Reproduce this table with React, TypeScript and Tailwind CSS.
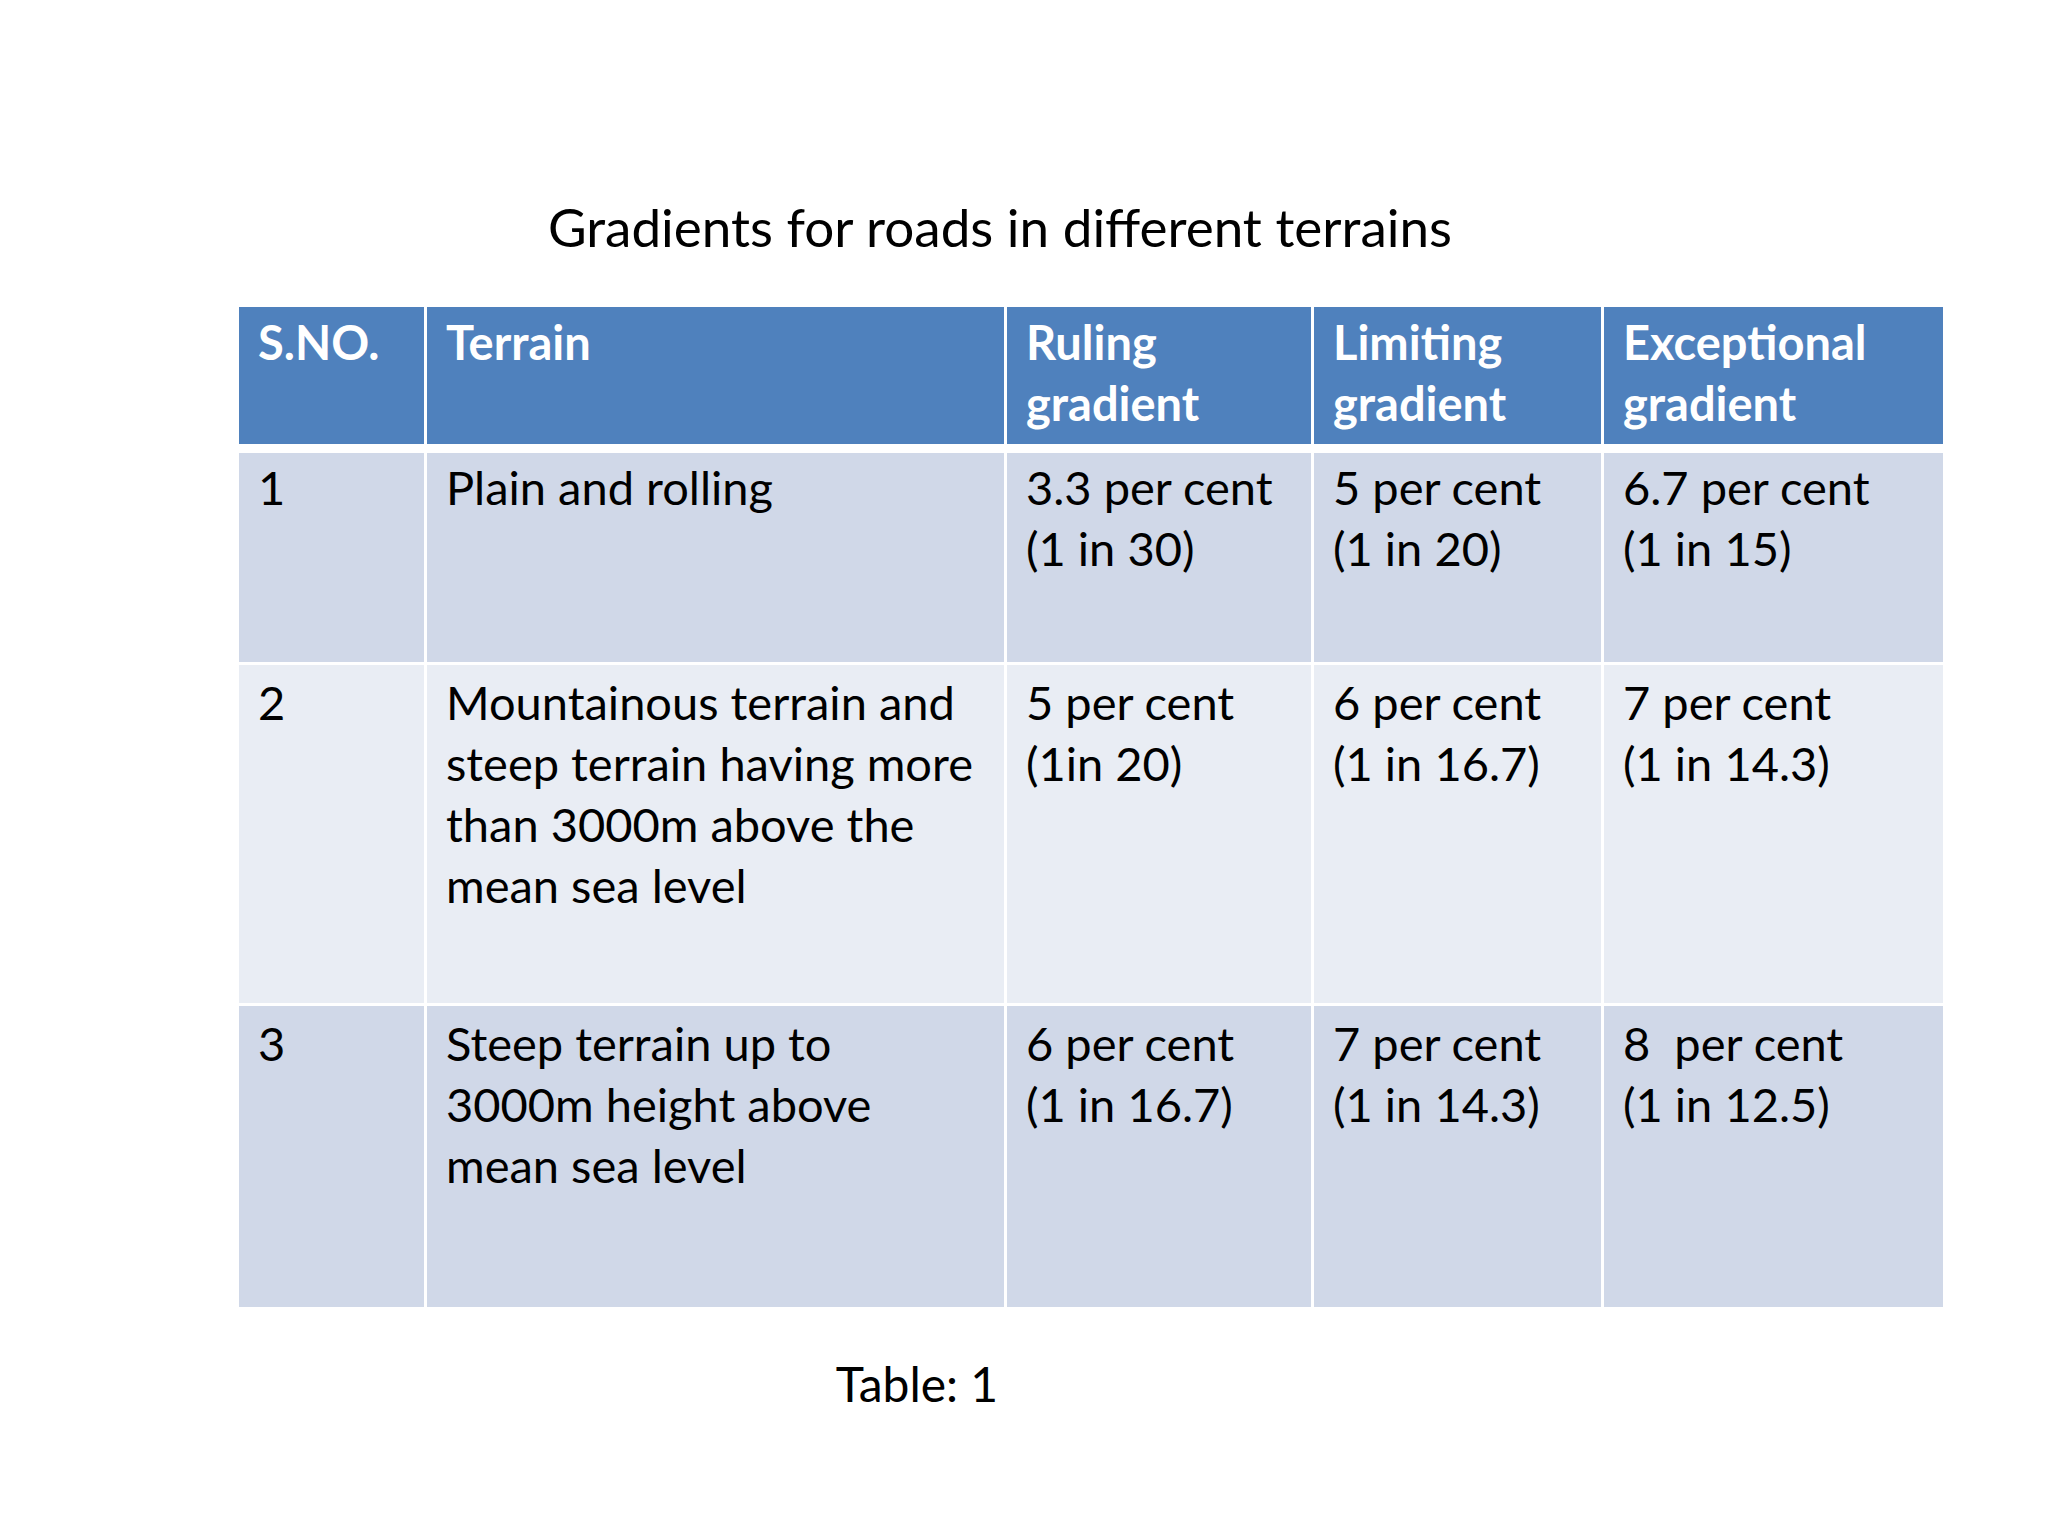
const font = { fontFamily: "Lato, 'Open Sans', sans-serif" };

const cols = "grid grid-cols-[185px_577px_304px_287px_339px] gap-x-[3px]";

const header = [
  ["S.NO."],
  ["Terrain"],
  ["Ruling", "gradient"],
  ["Limiting", "gradient"],
  ["Exceptional", "gradient"],
];

const rows = [
  {
    bg: "bg-[#d0d8e8]",
    h: "h-[209px]",
    pt: "pt-[4px]",
    gap: "mt-[9px]",
    cells: [
      ["1"],
      ["Plain and rolling"],
      ["3.3 per cent", "(1 in 30)"],
      ["5 per cent", "(1 in 20)"],
      ["6.7 per cent", "(1 in 15)"],
    ],
  },
  {
    bg: "bg-[#e9edf4]",
    h: "h-[338px]",
    pt: "pt-[7px]",
    gap: "mt-[3px]",
    cells: [
      ["2"],
      ["Mountainous terrain and", "steep terrain having more", "than 3000m above the", "mean sea level"],
      ["5 per cent", "(1in 20)"],
      ["6 per cent", "(1 in 16.7)"],
      ["7 per cent", "(1 in 14.3)"],
    ],
  },
  {
    bg: "bg-[#d0d8e8]",
    h: "h-[301px]",
    pt: "pt-[7px]",
    gap: "mt-[3px]",
    cells: [
      ["3"],
      ["Steep terrain up to", "3000m height above", "mean sea level"],
      ["6 per cent", "(1 in 16.7)"],
      ["7 per cent", "(1 in 14.3)"],
      ["8\u00a0 per cent", "(1 in 12.5)"],
    ],
  },
];

function Lines({ lines }: { lines: string[] }) {
  return (
    <>
      {lines.map((l, i) => (
        <div key={i} className="whitespace-nowrap">
          {l}
        </div>
      ))}
    </>
  );
}

export default function App() {
  return (
    <div className="min-h-screen w-[2048px] h-[1536px] bg-white text-black" style={font}>
      <div className="w-[2000px] pt-[195px] text-center text-[53px] leading-[64px]">
        Gradients for roads in different terrains
      </div>

      <div className="ml-[239px] mt-[48px] w-[1704px] flex flex-col text-[47px] leading-[61px]">
        <div className={`${cols} h-[137px]`}>
          {header.map((c, i) => (
            <div key={i} className="bg-[#4f81bd] pl-[19px] pt-[5px] font-bold text-white">
              <Lines lines={c} />
            </div>
          ))}
        </div>

        {rows.map((r, ri) => (
          <div key={ri} className={`${cols} ${r.h} ${r.gap}`}>
            {r.cells.map((c, i) => (
              <div key={i} className={`${r.bg} ${r.pt} pl-[19px]`}>
                <Lines lines={c} />
              </div>
            ))}
          </div>
        ))}
      </div>

      <div className="w-[1834px] mt-[46px] text-center text-[48px] leading-[61px]">Table: 1</div>
    </div>
  );
}
